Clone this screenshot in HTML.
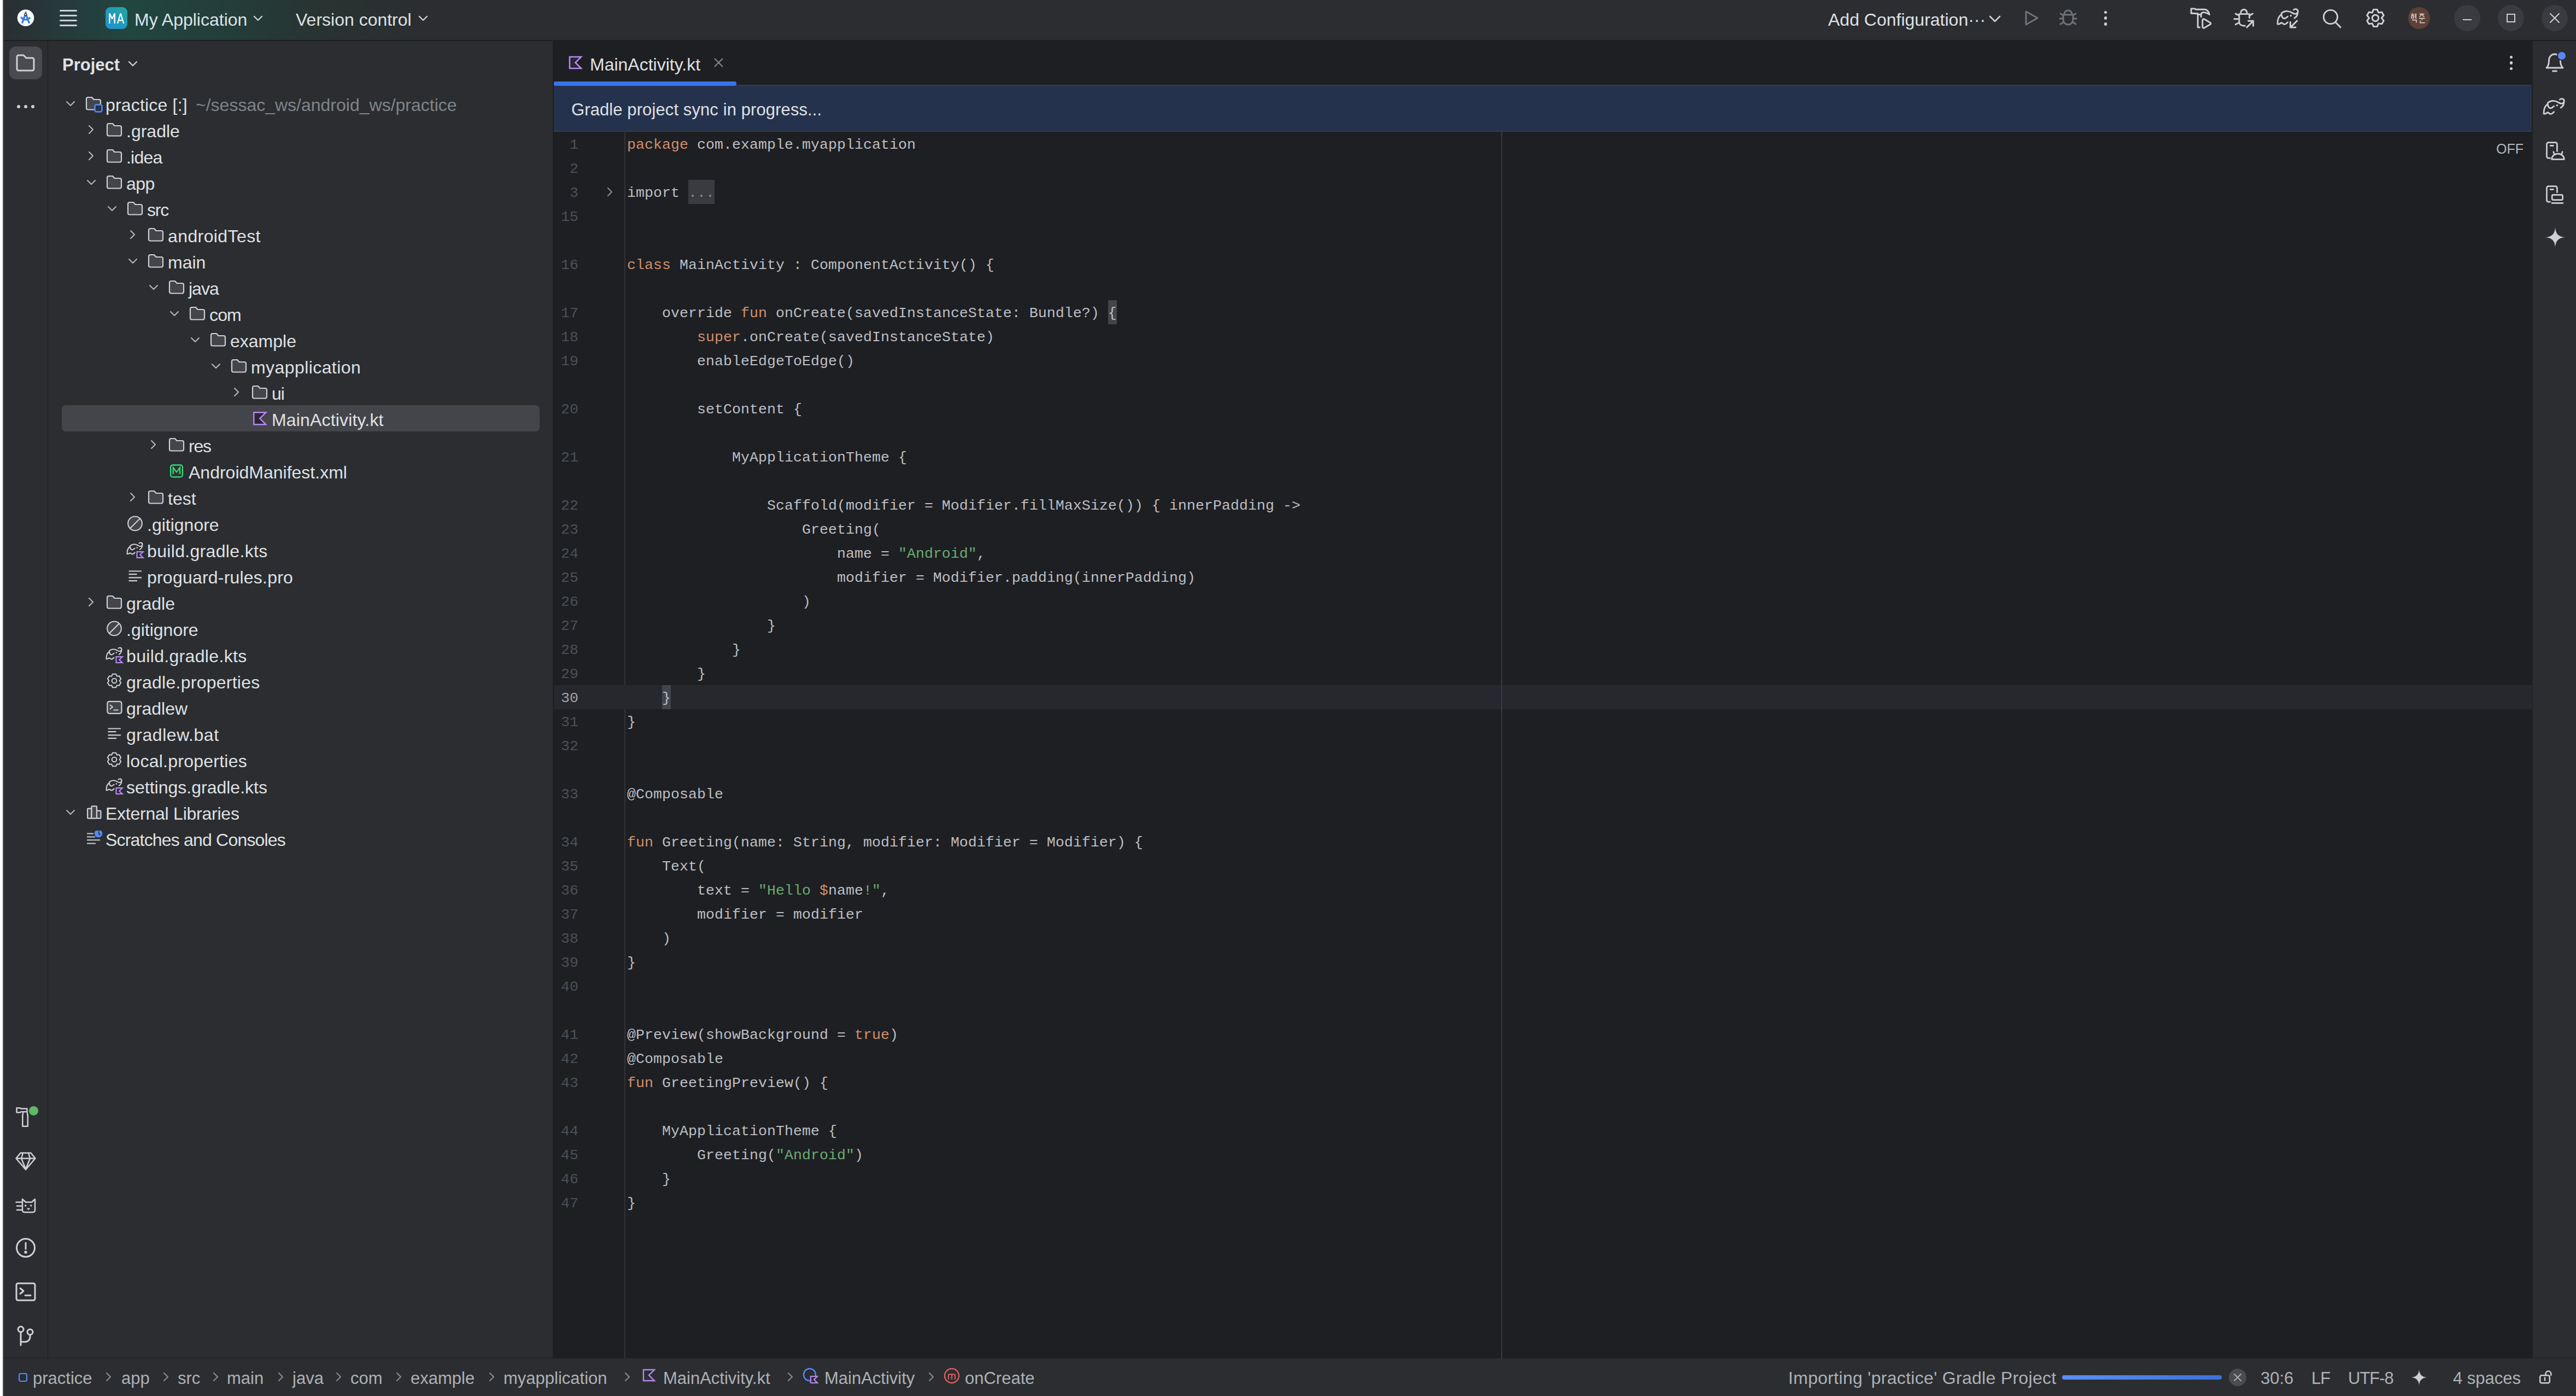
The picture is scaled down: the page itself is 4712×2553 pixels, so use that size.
<!DOCTYPE html>
<html><head><meta charset="utf-8"><style>
html,body{margin:0;padding:0;}
body{width:4712px;height:2553px;position:relative;overflow:hidden;background:#2b2d30;font-family:"Liberation Sans", sans-serif;}
body>div{position:absolute;}
.t{white-space:pre;line-height:1;}
</style></head><body>
<div style="left:0px;top:0px;width:5px;height:2553px;background:#ffffff;"></div><div style="left:5px;top:0px;width:2px;height:2553px;background:#4e5157;"></div><div style="left:7px;top:0px;width:4705px;height:73px;background:linear-gradient(90deg, #2b2e31 0px, #27383a 90px, #21463f 230px, #233e3a 400px, #283331 580px, #2b2d30 760px);"></div><div style="left:7px;top:73px;width:4705px;height:2px;background:#1e1f22;"></div><div style="left:7px;top:75px;width:80px;height:2409px;background:#2b2d30;"></div><div style="left:87px;top:75px;width:1px;height:2409px;background:#1e1f22;"></div><div style="left:88px;top:75px;width:923px;height:2409px;background:#2b2d30;"></div><div style="left:1011px;top:75px;width:3622px;height:2409px;background:#1e1f22;"></div><div style="left:4633px;top:75px;width:79px;height:2409px;background:#2b2d30;"></div><div style="left:4632px;top:75px;width:1px;height:2409px;background:#1e1f22;"></div><div style="left:7px;top:2483px;width:4705px;height:1px;background:#1e1f22;"></div><div style="left:7px;top:2484px;width:4705px;height:69px;background:#2b2d30;"></div><svg style="position:absolute;left:30px;top:16px;" width="34" height="34" viewBox="0 0 34 34" fill="none" stroke="#ced0d6" stroke-width="3" stroke-linecap="round" stroke-linejoin="round"><circle cx="17" cy="16.7" r="15" fill="#ffffff" stroke="#ffffff" stroke-width="0.6" stroke-dasharray="2 1.2"/><path d="M16.9 9 L10.8 25.4 M16.9 9 L23.2 25.4 M13 19.8 H20.5 M9 16.3 L12 18.5 M16.9 6.6 V8.5" stroke="#3b78e7" stroke-width="3.3"/><circle cx="16.9" cy="10.8" r="1.9" fill="#fff" stroke="#1a1a1a" stroke-width="1.2"/><circle cx="23.6" cy="17.2" r="2.3" fill="#3ea84f" stroke="none"/></svg><div style="left:109px;top:17.5px;width:32px;height:3px;background:#ced0d6;border-radius:2px;"></div><div style="left:109px;top:26.5px;width:32px;height:3px;background:#ced0d6;border-radius:2px;"></div><div style="left:109px;top:36.0px;width:32px;height:3px;background:#ced0d6;border-radius:2px;"></div><div style="left:109px;top:45.0px;width:32px;height:3px;background:#ced0d6;border-radius:2px;"></div><div style="left:193px;top:13px;width:40px;height:40px;background:linear-gradient(45deg,#1e8fd6 0%,#26a69a 100%);border-radius:9px;"></div><svg style="position:absolute;left:193px;top:13px;" width="40" height="40" viewBox="0 0 40 40" fill="none" stroke="#ced0d6" stroke-width="3" stroke-linecap="round" stroke-linejoin="round"><path d="M7.4 30 V11.5 L12.1 21.5 L16.8 11.5 V30 M22 30 L27.6 11.5 L33.2 30 M23.9 24.2 H31.3" stroke="#ffffff" stroke-width="2.3" stroke-linecap="butt" stroke-linejoin="bevel"/></svg><div class="t" style="left:246px;top:19.91px;font-size:32px;color:#dfe1e5;font-weight:400;font-family:'Liberation Sans', sans-serif;">My Application</div><svg style="position:absolute;left:462px;top:26px;" width="20" height="14" viewBox="0 0 20 14" fill="none" stroke="#ced0d6" stroke-width="3" stroke-linecap="round" stroke-linejoin="round"><path d="M3 4 L10 11 L17 4" stroke-width="2.4"/></svg><div class="t" style="left:541px;top:19.91px;font-size:32px;color:#dfe1e5;font-weight:400;font-family:'Liberation Sans', sans-serif;">Version control</div><svg style="position:absolute;left:764px;top:26px;" width="20" height="14" viewBox="0 0 20 14" fill="none" stroke="#ced0d6" stroke-width="3" stroke-linecap="round" stroke-linejoin="round"><path d="M3 4 L10 11 L17 4" stroke-width="2.4"/></svg><div class="t" style="left:3344px;top:19.91px;font-size:32px;color:#dfe1e5;font-weight:400;font-family:'Liberation Sans', sans-serif;">Add Configuration···</div><svg style="position:absolute;left:3637px;top:26px;" width="24" height="16" viewBox="0 0 24 16" fill="none" stroke="#ced0d6" stroke-width="3" stroke-linecap="round" stroke-linejoin="round"><path d="M3 4 L12 13 L21 4" stroke-width="2.6"/></svg><svg style="position:absolute;left:3700px;top:17px;" width="32" height="32" viewBox="0 0 32 32" fill="none" stroke="#ced0d6" stroke-width="3" stroke-linecap="round" stroke-linejoin="round"><path d="M6 4 L27 16 L6 28 Z" stroke="#6f737a"/></svg><svg style="position:absolute;left:3765px;top:17px;" width="36" height="32" viewBox="0 0 36 32" fill="none" stroke="#ced0d6" stroke-width="3" stroke-linecap="round" stroke-linejoin="round"><path d="M11 9 a7 7 0 0 1 14 0 M9 10 h18 v9 a9 9 0 0 1 -18 0 z M3 17 h6 M27 17 h6 M4 8 l5 3 M32 8 l-5 3 M4 27 l5 -3 M32 27 l-5 -3" stroke="#6f737a"/></svg><div style="left:3848.5px;top:19.75px;width:5.5px;height:5.5px;background:#ced0d6;border-radius:50%;"></div><div style="left:3848.5px;top:30.25px;width:5.5px;height:5.5px;background:#ced0d6;border-radius:50%;"></div><div style="left:3848.5px;top:41.25px;width:5.5px;height:5.5px;background:#ced0d6;border-radius:50%;"></div><svg style="position:absolute;left:4004px;top:13px;" width="44" height="42" viewBox="0 0 44 42" fill="none" stroke="#ced0d6" stroke-width="3" stroke-linecap="round" stroke-linejoin="round"><path d="M4.1 2.9 H10.5 L12.5 4.3 H28.5 C33 4.3 36.5 8.5 37.4 13.6 C33.5 10.8 30 9.6 26.5 9.6 C24 9.6 22.5 11 22.2 13.5 H16.2 V11.8 H12.5 L10.5 11.5 H4.1 Z M16.2 13.5 V37 H19.5 M22.2 13.5 V18" stroke-width="2.9"/><path d="M24.8 24 C24.8 22 26.5 21.3 28 22 L39 28.5 C40.3 29.3 40.3 30.8 39 31.6 L28 38 C26.5 38.8 24.8 38 24.8 36 Z" stroke-width="2.9"/></svg><svg style="position:absolute;left:4084px;top:13px;" width="42" height="42" viewBox="0 0 42 42" fill="none" stroke="#ced0d6" stroke-width="3" stroke-linecap="round" stroke-linejoin="round"><path d="M14.9 10.1 A5.6 5.6 0 0 1 26.1 10.1 M11.9 12.6 H30.6 V19.7 M11.9 12.6 V27 C11.9 31.5 16 34.3 22.5 34.3 M5.3 12.1 L11.4 15.2 M2.8 21.7 H9.4 M5.3 31.8 L10.9 28.8 M36.6 12.1 L31 15.2 M26 36.9 L37.6 25.3 M28.5 25.3 H37.6 V34.4" stroke-width="2.9"/></svg><svg style="position:absolute;left:4164.3px;top:11.9px;" width="45.3" height="45.3" viewBox="0 0 34 34" fill="none" stroke="#ced0d6" stroke-width="3" stroke-linecap="round" stroke-linejoin="round"><path d="M6.9 9.2 C12 5 18 6 22.5 9 C25.5 11 29.5 10 29.5 6.5 C29.5 3.5 26 2.5 23.5 4.5 M29.3 8.5 C29 12 27 14.5 24.8 15.8 M6.7 11 C3 13 1.5 17 1.5 24 C3.5 24.5 4.5 24 5.5 23 C7 21.5 8 22.5 9 23.5 C10.5 25 13 24.5 15.5 21.5 M6.9 9.4 C7 13 8 16 10.5 16.5 C12.5 16.5 14 15 15.5 13.7" stroke-width="2.1"/><circle cx="19.8" cy="12.6" r="1.3" fill="#ced0d6" stroke="none"/><path d="M28.3 19.6 L19.5 28.3 M19.1 21.3 V28.5 H26.3" stroke-width="2.2"/></svg><svg style="position:absolute;left:4246px;top:14px;" width="40" height="40" viewBox="0 0 40 40" fill="none" stroke="#ced0d6" stroke-width="3" stroke-linecap="round" stroke-linejoin="round"><circle cx="17" cy="17" r="12.6" stroke-width="2.9"/><path d="M26.6 27.3 L35.2 35.9" stroke-width="2.9"/></svg><svg style="position:absolute;left:4326px;top:14px;" width="38" height="38" viewBox="0 0 38 38" fill="none" stroke="#ced0d6" stroke-width="3" stroke-linecap="round" stroke-linejoin="round"><path d="M13.30 9.13 L15.67 3.35 L22.33 3.35 L24.70 9.13 L30.89 8.29 L34.22 14.06 L30.40 19.00 L34.22 23.94 L30.89 29.71 L24.70 28.87 L22.33 34.65 L15.67 34.65 L13.30 28.87 L7.11 29.71 L3.78 23.94 L7.60 19.00 L3.78 14.06 L7.11 8.29 Z" stroke-width="2.9"/><circle cx="19" cy="19" r="5.8" stroke-width="2.9"/></svg><div style="left:4405px;top:13px;width:40px;height:40px;background:#5d4037;border-radius:50%;"></div><svg style="position:absolute;left:4405px;top:13px;filter:blur(0.4px);" width="40" height="40" viewBox="0 0 40 40" fill="none" stroke="#ced0d6" stroke-width="3" stroke-linecap="round" stroke-linejoin="round"><path d="M6.5 12.3 h3 M5 14.6 h6 M11.5 14.3 h2.3 M11.5 17.6 h2.3 M14.2 11.6 v10 M7 23.6 h8 v5 M20.5 12.6 h9 M25 12.8 l-4.2 5.2 M25 12.8 l4.2 5.2 M19.8 20.6 h10.8 M25.2 20.8 v2.8 M22 24.4 v4.3 h8.5" stroke="#d8c9c4" stroke-width="1.7" stroke-linecap="butt" stroke-linejoin="miter"/><circle cx="8" cy="18.4" r="2.1" stroke="#d8c9c4" stroke-width="1.6"/></svg><div style="left:4489px;top:9px;width:48px;height:48px;background:#393b40;border-radius:50%;"></div><div style="left:4569px;top:9px;width:48px;height:48px;background:#393b40;border-radius:50%;"></div><div style="left:4649px;top:9px;width:48px;height:48px;background:#393b40;border-radius:50%;"></div><div style="left:4505px;top:35px;width:16px;height:2px;background:#ced0d6;"></div><div style="left:4585px;top:25px;width:16px;height:16px;background:transparent;border:2px solid #ced0d6;box-sizing:border-box;"></div><svg style="position:absolute;left:4663px;top:23px;" width="20" height="20" viewBox="0 0 20 20" fill="none" stroke="#ced0d6" stroke-width="3" stroke-linecap="round" stroke-linejoin="round"><path d="M2 2 L18 18 M18 2 L2 18" stroke-width="2"/></svg><div style="left:17px;top:85px;width:60px;height:60px;background:#494b50;border-radius:12px;"></div><svg style="position:absolute;left:27px;top:98px;" width="40" height="34" viewBox="0 0 40 34" fill="none" stroke="#ced0d6" stroke-width="3" stroke-linecap="round" stroke-linejoin="round"><path d="M4 6 a3 3 0 0 1 3 -3 h9 l5 5 h11 a3 3 0 0 1 3 3 v17 a3 3 0 0 1 -3 3 h-25 a3 3 0 0 1 -3 -3 z"/></svg><div style="left:30.8px;top:191.8px;width:6.4px;height:6.4px;background:#ced0d6;border-radius:50%;"></div><div style="left:43.8px;top:191.8px;width:6.4px;height:6.4px;background:#ced0d6;border-radius:50%;"></div><div style="left:56.8px;top:191.8px;width:6.4px;height:6.4px;background:#ced0d6;border-radius:50%;"></div><div class="t" style="left:114px;top:102.76px;font-size:31px;color:#dfe1e5;font-weight:700;font-family:'Liberation Sans', sans-serif;">Project</div><svg style="position:absolute;left:233px;top:110px;" width="20" height="14" viewBox="0 0 20 14" fill="none" stroke="#ced0d6" stroke-width="3" stroke-linecap="round" stroke-linejoin="round"><path d="M3 3 L10 10 L17 3" stroke-width="2.4"/></svg><svg style="position:absolute;left:119px;top:182.5px;" width="20" height="14" viewBox="0 0 20 14" fill="none" stroke="#ced0d6" stroke-width="3" stroke-linecap="round" stroke-linejoin="round"><path d="M3 3 L10 10 L17 3" stroke-width="2.1" stroke="#b4b8bf"/></svg><svg style="position:absolute;left:156px;top:175.5px;" width="30" height="28" viewBox="0 0 30 28" fill="none" stroke="#ced0d6" stroke-width="3" stroke-linecap="round" stroke-linejoin="round"><path d="M2 5 a3 3 0 0 1 3 -3 h7 l3.5 4 h9.5 a3 3 0 0 1 3 3 v12.5 a3 3 0 0 1 -3 3 h-20 a3 3 0 0 1 -3 -3 z" fill="#43454a" stroke-width="2.2"/></svg><svg style="position:absolute;left:172px;top:189.5px;" width="16" height="16" viewBox="0 0 16 16" fill="none" stroke="#ced0d6" stroke-width="3" stroke-linecap="round" stroke-linejoin="round"><rect x="1.5" y="1.5" width="13" height="13" rx="3" fill="#25324d" stroke="#548af7" stroke-width="2.4"/></svg><div class="t" style="left:193px;top:175.91px;font-size:32px;color:#dfe1e5;font-weight:400;font-family:'Liberation Sans', sans-serif;letter-spacing:0.18px;">practice [:]</div><div class="t" style="left:358px;top:175.91px;font-size:32px;color:#80848b;font-weight:400;font-family:'Liberation Sans', sans-serif;">~/sessac_ws/android_ws/practice</div><svg style="position:absolute;left:160px;top:227.0px;" width="14" height="20" viewBox="0 0 14 20" fill="none" stroke="#ced0d6" stroke-width="3" stroke-linecap="round" stroke-linejoin="round"><path d="M3 3 L10 10 L3 17" stroke-width="2.1" stroke="#b4b8bf"/></svg><svg style="position:absolute;left:194px;top:223.5px;" width="30" height="28" viewBox="0 0 30 28" fill="none" stroke="#ced0d6" stroke-width="3" stroke-linecap="round" stroke-linejoin="round"><path d="M2 5 a3 3 0 0 1 3 -3 h7 l3.5 4 h9.5 a3 3 0 0 1 3 3 v12.5 a3 3 0 0 1 -3 3 h-20 a3 3 0 0 1 -3 -3 z" fill="#43454a" stroke-width="2.2"/></svg><div class="t" style="left:231px;top:223.91px;font-size:32px;color:#dfe1e5;font-weight:400;font-family:'Liberation Sans', sans-serif;letter-spacing:0px;">.gradle</div><svg style="position:absolute;left:160px;top:275.0px;" width="14" height="20" viewBox="0 0 14 20" fill="none" stroke="#ced0d6" stroke-width="3" stroke-linecap="round" stroke-linejoin="round"><path d="M3 3 L10 10 L3 17" stroke-width="2.1" stroke="#b4b8bf"/></svg><svg style="position:absolute;left:194px;top:271.5px;" width="30" height="28" viewBox="0 0 30 28" fill="none" stroke="#ced0d6" stroke-width="3" stroke-linecap="round" stroke-linejoin="round"><path d="M2 5 a3 3 0 0 1 3 -3 h7 l3.5 4 h9.5 a3 3 0 0 1 3 3 v12.5 a3 3 0 0 1 -3 3 h-20 a3 3 0 0 1 -3 -3 z" fill="#43454a" stroke-width="2.2"/></svg><div class="t" style="left:231px;top:271.91px;font-size:32px;color:#dfe1e5;font-weight:400;font-family:'Liberation Sans', sans-serif;letter-spacing:-0.8px;">.idea</div><svg style="position:absolute;left:157px;top:326.5px;" width="20" height="14" viewBox="0 0 20 14" fill="none" stroke="#ced0d6" stroke-width="3" stroke-linecap="round" stroke-linejoin="round"><path d="M3 3 L10 10 L17 3" stroke-width="2.1" stroke="#b4b8bf"/></svg><svg style="position:absolute;left:194px;top:319.5px;" width="30" height="28" viewBox="0 0 30 28" fill="none" stroke="#ced0d6" stroke-width="3" stroke-linecap="round" stroke-linejoin="round"><path d="M2 5 a3 3 0 0 1 3 -3 h7 l3.5 4 h9.5 a3 3 0 0 1 3 3 v12.5 a3 3 0 0 1 -3 3 h-20 a3 3 0 0 1 -3 -3 z" fill="#43454a" stroke-width="2.2"/></svg><div class="t" style="left:231px;top:319.91px;font-size:32px;color:#dfe1e5;font-weight:400;font-family:'Liberation Sans', sans-serif;letter-spacing:-0.6px;">app</div><svg style="position:absolute;left:195px;top:374.5px;" width="20" height="14" viewBox="0 0 20 14" fill="none" stroke="#ced0d6" stroke-width="3" stroke-linecap="round" stroke-linejoin="round"><path d="M3 3 L10 10 L17 3" stroke-width="2.1" stroke="#b4b8bf"/></svg><svg style="position:absolute;left:232px;top:367.5px;" width="30" height="28" viewBox="0 0 30 28" fill="none" stroke="#ced0d6" stroke-width="3" stroke-linecap="round" stroke-linejoin="round"><path d="M2 5 a3 3 0 0 1 3 -3 h7 l3.5 4 h9.5 a3 3 0 0 1 3 3 v12.5 a3 3 0 0 1 -3 3 h-20 a3 3 0 0 1 -3 -3 z" fill="#43454a" stroke-width="2.2"/></svg><div class="t" style="left:269px;top:367.91px;font-size:32px;color:#dfe1e5;font-weight:400;font-family:'Liberation Sans', sans-serif;letter-spacing:-1.2px;">src</div><svg style="position:absolute;left:236px;top:419.0px;" width="14" height="20" viewBox="0 0 14 20" fill="none" stroke="#ced0d6" stroke-width="3" stroke-linecap="round" stroke-linejoin="round"><path d="M3 3 L10 10 L3 17" stroke-width="2.1" stroke="#b4b8bf"/></svg><svg style="position:absolute;left:270px;top:415.5px;" width="30" height="28" viewBox="0 0 30 28" fill="none" stroke="#ced0d6" stroke-width="3" stroke-linecap="round" stroke-linejoin="round"><path d="M2 5 a3 3 0 0 1 3 -3 h7 l3.5 4 h9.5 a3 3 0 0 1 3 3 v12.5 a3 3 0 0 1 -3 3 h-20 a3 3 0 0 1 -3 -3 z" fill="#43454a" stroke-width="2.2"/></svg><div class="t" style="left:307px;top:415.91px;font-size:32px;color:#dfe1e5;font-weight:400;font-family:'Liberation Sans', sans-serif;letter-spacing:0.4px;">androidTest</div><svg style="position:absolute;left:233px;top:470.5px;" width="20" height="14" viewBox="0 0 20 14" fill="none" stroke="#ced0d6" stroke-width="3" stroke-linecap="round" stroke-linejoin="round"><path d="M3 3 L10 10 L17 3" stroke-width="2.1" stroke="#b4b8bf"/></svg><svg style="position:absolute;left:270px;top:463.5px;" width="30" height="28" viewBox="0 0 30 28" fill="none" stroke="#ced0d6" stroke-width="3" stroke-linecap="round" stroke-linejoin="round"><path d="M2 5 a3 3 0 0 1 3 -3 h7 l3.5 4 h9.5 a3 3 0 0 1 3 3 v12.5 a3 3 0 0 1 -3 3 h-20 a3 3 0 0 1 -3 -3 z" fill="#43454a" stroke-width="2.2"/></svg><div class="t" style="left:307px;top:463.91px;font-size:32px;color:#dfe1e5;font-weight:400;font-family:'Liberation Sans', sans-serif;letter-spacing:0px;">main</div><svg style="position:absolute;left:271px;top:518.5px;" width="20" height="14" viewBox="0 0 20 14" fill="none" stroke="#ced0d6" stroke-width="3" stroke-linecap="round" stroke-linejoin="round"><path d="M3 3 L10 10 L17 3" stroke-width="2.1" stroke="#b4b8bf"/></svg><svg style="position:absolute;left:308px;top:511.5px;" width="30" height="28" viewBox="0 0 30 28" fill="none" stroke="#ced0d6" stroke-width="3" stroke-linecap="round" stroke-linejoin="round"><path d="M2 5 a3 3 0 0 1 3 -3 h7 l3.5 4 h9.5 a3 3 0 0 1 3 3 v12.5 a3 3 0 0 1 -3 3 h-20 a3 3 0 0 1 -3 -3 z" fill="#43454a" stroke-width="2.2"/></svg><div class="t" style="left:345px;top:511.91px;font-size:32px;color:#dfe1e5;font-weight:400;font-family:'Liberation Sans', sans-serif;letter-spacing:-1px;">java</div><svg style="position:absolute;left:309px;top:566.5px;" width="20" height="14" viewBox="0 0 20 14" fill="none" stroke="#ced0d6" stroke-width="3" stroke-linecap="round" stroke-linejoin="round"><path d="M3 3 L10 10 L17 3" stroke-width="2.1" stroke="#b4b8bf"/></svg><svg style="position:absolute;left:346px;top:559.5px;" width="30" height="28" viewBox="0 0 30 28" fill="none" stroke="#ced0d6" stroke-width="3" stroke-linecap="round" stroke-linejoin="round"><path d="M2 5 a3 3 0 0 1 3 -3 h7 l3.5 4 h9.5 a3 3 0 0 1 3 3 v12.5 a3 3 0 0 1 -3 3 h-20 a3 3 0 0 1 -3 -3 z" fill="#43454a" stroke-width="2.2"/></svg><div class="t" style="left:383px;top:559.91px;font-size:32px;color:#dfe1e5;font-weight:400;font-family:'Liberation Sans', sans-serif;letter-spacing:-0.85px;">com</div><svg style="position:absolute;left:347px;top:614.5px;" width="20" height="14" viewBox="0 0 20 14" fill="none" stroke="#ced0d6" stroke-width="3" stroke-linecap="round" stroke-linejoin="round"><path d="M3 3 L10 10 L17 3" stroke-width="2.1" stroke="#b4b8bf"/></svg><svg style="position:absolute;left:384px;top:607.5px;" width="30" height="28" viewBox="0 0 30 28" fill="none" stroke="#ced0d6" stroke-width="3" stroke-linecap="round" stroke-linejoin="round"><path d="M2 5 a3 3 0 0 1 3 -3 h7 l3.5 4 h9.5 a3 3 0 0 1 3 3 v12.5 a3 3 0 0 1 -3 3 h-20 a3 3 0 0 1 -3 -3 z" fill="#43454a" stroke-width="2.2"/></svg><div class="t" style="left:421px;top:607.91px;font-size:32px;color:#dfe1e5;font-weight:400;font-family:'Liberation Sans', sans-serif;letter-spacing:0px;">example</div><svg style="position:absolute;left:385px;top:662.5px;" width="20" height="14" viewBox="0 0 20 14" fill="none" stroke="#ced0d6" stroke-width="3" stroke-linecap="round" stroke-linejoin="round"><path d="M3 3 L10 10 L17 3" stroke-width="2.1" stroke="#b4b8bf"/></svg><svg style="position:absolute;left:422px;top:655.5px;" width="30" height="28" viewBox="0 0 30 28" fill="none" stroke="#ced0d6" stroke-width="3" stroke-linecap="round" stroke-linejoin="round"><path d="M2 5 a3 3 0 0 1 3 -3 h7 l3.5 4 h9.5 a3 3 0 0 1 3 3 v12.5 a3 3 0 0 1 -3 3 h-20 a3 3 0 0 1 -3 -3 z" fill="#43454a" stroke-width="2.2"/></svg><div class="t" style="left:459px;top:655.91px;font-size:32px;color:#dfe1e5;font-weight:400;font-family:'Liberation Sans', sans-serif;letter-spacing:0.42px;">myapplication</div><svg style="position:absolute;left:426px;top:707.0px;" width="14" height="20" viewBox="0 0 14 20" fill="none" stroke="#ced0d6" stroke-width="3" stroke-linecap="round" stroke-linejoin="round"><path d="M3 3 L10 10 L3 17" stroke-width="2.1" stroke="#b4b8bf"/></svg><svg style="position:absolute;left:460px;top:703.5px;" width="30" height="28" viewBox="0 0 30 28" fill="none" stroke="#ced0d6" stroke-width="3" stroke-linecap="round" stroke-linejoin="round"><path d="M2 5 a3 3 0 0 1 3 -3 h7 l3.5 4 h9.5 a3 3 0 0 1 3 3 v12.5 a3 3 0 0 1 -3 3 h-20 a3 3 0 0 1 -3 -3 z" fill="#43454a" stroke-width="2.2"/></svg><div class="t" style="left:497px;top:703.91px;font-size:32px;color:#dfe1e5;font-weight:400;font-family:'Liberation Sans', sans-serif;letter-spacing:-1px;">ui</div><div style="left:113px;top:740.5px;width:874px;height:48px;background:#43454a;border-radius:7px;"></div><svg style="position:absolute;left:462px;top:751.5px;" width="27" height="27" viewBox="0 0 27 27" fill="none" stroke="#ced0d6" stroke-width="3" stroke-linecap="round" stroke-linejoin="round"><path d="M2.3 2.3 H24.3 L13.3 13.3 L24.3 24.3 H2.3 Z" fill="#2b2537" stroke="#b589ec" stroke-width="2.4" stroke-linejoin="miter"/></svg><div class="t" style="left:497px;top:751.91px;font-size:32px;color:#dfe1e5;font-weight:400;font-family:'Liberation Sans', sans-serif;letter-spacing:0.17px;">MainActivity.kt</div><svg style="position:absolute;left:274px;top:803.0px;" width="14" height="20" viewBox="0 0 14 20" fill="none" stroke="#ced0d6" stroke-width="3" stroke-linecap="round" stroke-linejoin="round"><path d="M3 3 L10 10 L3 17" stroke-width="2.1" stroke="#b4b8bf"/></svg><svg style="position:absolute;left:308px;top:799.5px;" width="30" height="28" viewBox="0 0 30 28" fill="none" stroke="#ced0d6" stroke-width="3" stroke-linecap="round" stroke-linejoin="round"><path d="M2 5 a3 3 0 0 1 3 -3 h7 l3.5 4 h9.5 a3 3 0 0 1 3 3 v12.5 a3 3 0 0 1 -3 3 h-20 a3 3 0 0 1 -3 -3 z" fill="#43454a" stroke-width="2.2"/></svg><div class="t" style="left:345px;top:799.91px;font-size:32px;color:#dfe1e5;font-weight:400;font-family:'Liberation Sans', sans-serif;letter-spacing:-1.2px;">res</div><svg style="position:absolute;left:310px;top:847.5px;" width="28" height="28" viewBox="0 0 28 28" fill="none" stroke="#ced0d6" stroke-width="3" stroke-linecap="round" stroke-linejoin="round"><rect x="2.1" y="2.4" width="21.8" height="22" rx="4" fill="#243a2d" stroke="#3ddc84" stroke-width="2.2"/><path d="M6.8 19 V7 L12.9 15.5 L19 7 V19" stroke="#3ddc84" stroke-width="2.1" stroke-linejoin="miter" stroke-linecap="butt"/></svg><div class="t" style="left:345px;top:847.91px;font-size:32px;color:#dfe1e5;font-weight:400;font-family:'Liberation Sans', sans-serif;letter-spacing:0px;">AndroidManifest.xml</div><svg style="position:absolute;left:236px;top:899.0px;" width="14" height="20" viewBox="0 0 14 20" fill="none" stroke="#ced0d6" stroke-width="3" stroke-linecap="round" stroke-linejoin="round"><path d="M3 3 L10 10 L3 17" stroke-width="2.1" stroke="#b4b8bf"/></svg><svg style="position:absolute;left:270px;top:895.5px;" width="30" height="28" viewBox="0 0 30 28" fill="none" stroke="#ced0d6" stroke-width="3" stroke-linecap="round" stroke-linejoin="round"><path d="M2 5 a3 3 0 0 1 3 -3 h7 l3.5 4 h9.5 a3 3 0 0 1 3 3 v12.5 a3 3 0 0 1 -3 3 h-20 a3 3 0 0 1 -3 -3 z" fill="#43454a" stroke-width="2.2"/></svg><div class="t" style="left:307px;top:895.91px;font-size:32px;color:#dfe1e5;font-weight:400;font-family:'Liberation Sans', sans-serif;letter-spacing:0px;">test</div><svg style="position:absolute;left:232px;top:942.5px;" width="30" height="30" viewBox="0 0 30 30" fill="none" stroke="#ced0d6" stroke-width="3" stroke-linecap="round" stroke-linejoin="round"><circle cx="15" cy="14.35" r="12.85" fill="#43454a" stroke-width="2.1"/><path d="M6.3 23 L23.8 5.4" stroke-width="2.1"/></svg><div class="t" style="left:269px;top:943.91px;font-size:32px;color:#dfe1e5;font-weight:400;font-family:'Liberation Sans', sans-serif;letter-spacing:0px;">.gitignore</div><svg style="position:absolute;left:231px;top:988.5px;" width="34" height="34" viewBox="0 0 34 34" fill="none" stroke="#ced0d6" stroke-width="3" stroke-linecap="round" stroke-linejoin="round"><path d="M6.9 9.2 C12 5 18 6 22.5 9 C25.5 11 29.5 10 29.5 6.5 C29.5 3.5 26 2.5 23.5 4.5 M29.3 8.5 C29 12 27 14.5 24.8 15.8 M6.7 11 C3 13 1.5 17 1.5 24 C3.5 24.5 4.5 24 5.5 23 C7 21.5 8 22.5 9 23.5 C10.5 25 13 24.5 15.5 21.5 M6.9 9.4 C7 13 8 16 10.5 16.5 C12.5 16.5 14 15 15.5 13.7" stroke-width="2.1"/><circle cx="19.8" cy="12.6" r="1.3" fill="#ced0d6" stroke="none"/><path d="M19.5 20.2 H30.7 L25.2 25.5 L30.7 30.9 H19.5 Z" fill="#2b2537" stroke="#b589ec" stroke-width="2.2" stroke-linejoin="miter"/></svg><div class="t" style="left:269px;top:991.91px;font-size:32px;color:#dfe1e5;font-weight:400;font-family:'Liberation Sans', sans-serif;letter-spacing:0.33px;">build.gradle.kts</div><svg style="position:absolute;left:233px;top:1040.5px;" width="28" height="24" viewBox="0 0 28 24" fill="none" stroke="#ced0d6" stroke-width="3" stroke-linecap="round" stroke-linejoin="round"><path d="M2.5 3.5 h23.5 M2.5 9.2 h15 M2.5 15.4 h23.5 M2.5 21.1 h15.5" stroke-width="2.2" stroke-linecap="butt"/></svg><div class="t" style="left:269px;top:1039.91px;font-size:32px;color:#dfe1e5;font-weight:400;font-family:'Liberation Sans', sans-serif;letter-spacing:0.21px;">proguard-rules.pro</div><svg style="position:absolute;left:160px;top:1091.0px;" width="14" height="20" viewBox="0 0 14 20" fill="none" stroke="#ced0d6" stroke-width="3" stroke-linecap="round" stroke-linejoin="round"><path d="M3 3 L10 10 L3 17" stroke-width="2.1" stroke="#b4b8bf"/></svg><svg style="position:absolute;left:194px;top:1087.5px;" width="30" height="28" viewBox="0 0 30 28" fill="none" stroke="#ced0d6" stroke-width="3" stroke-linecap="round" stroke-linejoin="round"><path d="M2 5 a3 3 0 0 1 3 -3 h7 l3.5 4 h9.5 a3 3 0 0 1 3 3 v12.5 a3 3 0 0 1 -3 3 h-20 a3 3 0 0 1 -3 -3 z" fill="#43454a" stroke-width="2.2"/></svg><div class="t" style="left:231px;top:1087.91px;font-size:32px;color:#dfe1e5;font-weight:400;font-family:'Liberation Sans', sans-serif;letter-spacing:0px;">gradle</div><svg style="position:absolute;left:194px;top:1134.5px;" width="30" height="30" viewBox="0 0 30 30" fill="none" stroke="#ced0d6" stroke-width="3" stroke-linecap="round" stroke-linejoin="round"><circle cx="15" cy="14.35" r="12.85" fill="#43454a" stroke-width="2.1"/><path d="M6.3 23 L23.8 5.4" stroke-width="2.1"/></svg><div class="t" style="left:231px;top:1135.91px;font-size:32px;color:#dfe1e5;font-weight:400;font-family:'Liberation Sans', sans-serif;letter-spacing:0px;">.gitignore</div><svg style="position:absolute;left:193px;top:1180.5px;" width="34" height="34" viewBox="0 0 34 34" fill="none" stroke="#ced0d6" stroke-width="3" stroke-linecap="round" stroke-linejoin="round"><path d="M6.9 9.2 C12 5 18 6 22.5 9 C25.5 11 29.5 10 29.5 6.5 C29.5 3.5 26 2.5 23.5 4.5 M29.3 8.5 C29 12 27 14.5 24.8 15.8 M6.7 11 C3 13 1.5 17 1.5 24 C3.5 24.5 4.5 24 5.5 23 C7 21.5 8 22.5 9 23.5 C10.5 25 13 24.5 15.5 21.5 M6.9 9.4 C7 13 8 16 10.5 16.5 C12.5 16.5 14 15 15.5 13.7" stroke-width="2.1"/><circle cx="19.8" cy="12.6" r="1.3" fill="#ced0d6" stroke="none"/><path d="M19.5 20.2 H30.7 L25.2 25.5 L30.7 30.9 H19.5 Z" fill="#2b2537" stroke="#b589ec" stroke-width="2.2" stroke-linejoin="miter"/></svg><div class="t" style="left:231px;top:1183.91px;font-size:32px;color:#dfe1e5;font-weight:400;font-family:'Liberation Sans', sans-serif;letter-spacing:0.33px;">build.gradle.kts</div><svg style="position:absolute;left:195px;top:1230.5px;" width="28" height="28" viewBox="0 0 28 28" fill="none" stroke="#ced0d6" stroke-width="3" stroke-linecap="round" stroke-linejoin="round"><path d="M9.20 5.69 L10.95 1.77 L17.05 1.77 L18.80 5.69 L23.06 5.25 L26.11 10.53 L23.60 14.00 L26.11 17.47 L23.06 22.75 L18.80 22.31 L17.05 26.23 L10.95 26.23 L9.20 22.31 L4.94 22.75 L1.89 17.47 L4.40 14.00 L1.89 10.53 L4.94 5.25 Z" stroke-width="2.1"/><circle cx="14" cy="14" r="4.3" stroke-width="2.1"/></svg><div class="t" style="left:231px;top:1231.91px;font-size:32px;color:#dfe1e5;font-weight:400;font-family:'Liberation Sans', sans-serif;letter-spacing:0.26px;">gradle.properties</div><svg style="position:absolute;left:194px;top:1279.5px;" width="30" height="28" viewBox="0 0 30 28" fill="none" stroke="#ced0d6" stroke-width="3" stroke-linecap="round" stroke-linejoin="round"><rect x="2.4" y="2.8" width="26" height="22" rx="3.5" fill="#43454a" stroke-width="2.2"/><path d="M7.5 9.5 l4.5 3.5 l-4.5 3.5 M14.5 18.5 h7" stroke-width="2.2"/></svg><div class="t" style="left:231px;top:1279.91px;font-size:32px;color:#dfe1e5;font-weight:400;font-family:'Liberation Sans', sans-serif;letter-spacing:0px;">gradlew</div><svg style="position:absolute;left:195px;top:1328.5px;" width="28" height="24" viewBox="0 0 28 24" fill="none" stroke="#ced0d6" stroke-width="3" stroke-linecap="round" stroke-linejoin="round"><path d="M2.5 3.5 h23.5 M2.5 9.2 h15 M2.5 15.4 h23.5 M2.5 21.1 h15.5" stroke-width="2.2" stroke-linecap="butt"/></svg><div class="t" style="left:231px;top:1327.91px;font-size:32px;color:#dfe1e5;font-weight:400;font-family:'Liberation Sans', sans-serif;letter-spacing:0.54px;">gradlew.bat</div><svg style="position:absolute;left:195px;top:1374.5px;" width="28" height="28" viewBox="0 0 28 28" fill="none" stroke="#ced0d6" stroke-width="3" stroke-linecap="round" stroke-linejoin="round"><path d="M9.20 5.69 L10.95 1.77 L17.05 1.77 L18.80 5.69 L23.06 5.25 L26.11 10.53 L23.60 14.00 L26.11 17.47 L23.06 22.75 L18.80 22.31 L17.05 26.23 L10.95 26.23 L9.20 22.31 L4.94 22.75 L1.89 17.47 L4.40 14.00 L1.89 10.53 L4.94 5.25 Z" stroke-width="2.1"/><circle cx="14" cy="14" r="4.3" stroke-width="2.1"/></svg><div class="t" style="left:231px;top:1375.91px;font-size:32px;color:#dfe1e5;font-weight:400;font-family:'Liberation Sans', sans-serif;letter-spacing:0.25px;">local.properties</div><svg style="position:absolute;left:193px;top:1420.5px;" width="34" height="34" viewBox="0 0 34 34" fill="none" stroke="#ced0d6" stroke-width="3" stroke-linecap="round" stroke-linejoin="round"><path d="M6.9 9.2 C12 5 18 6 22.5 9 C25.5 11 29.5 10 29.5 6.5 C29.5 3.5 26 2.5 23.5 4.5 M29.3 8.5 C29 12 27 14.5 24.8 15.8 M6.7 11 C3 13 1.5 17 1.5 24 C3.5 24.5 4.5 24 5.5 23 C7 21.5 8 22.5 9 23.5 C10.5 25 13 24.5 15.5 21.5 M6.9 9.4 C7 13 8 16 10.5 16.5 C12.5 16.5 14 15 15.5 13.7" stroke-width="2.1"/><circle cx="19.8" cy="12.6" r="1.3" fill="#ced0d6" stroke="none"/><path d="M19.5 20.2 H30.7 L25.2 25.5 L30.7 30.9 H19.5 Z" fill="#2b2537" stroke="#b589ec" stroke-width="2.2" stroke-linejoin="miter"/></svg><div class="t" style="left:231px;top:1423.91px;font-size:32px;color:#dfe1e5;font-weight:400;font-family:'Liberation Sans', sans-serif;letter-spacing:0px;">settings.gradle.kts</div><svg style="position:absolute;left:119px;top:1478.5px;" width="20" height="14" viewBox="0 0 20 14" fill="none" stroke="#ced0d6" stroke-width="3" stroke-linecap="round" stroke-linejoin="round"><path d="M3 3 L10 10 L17 3" stroke-width="2.1" stroke="#b4b8bf"/></svg><svg style="position:absolute;left:156px;top:1470.5px;" width="30" height="30" viewBox="0 0 30 30" fill="none" stroke="#ced0d6" stroke-width="3" stroke-linecap="round" stroke-linejoin="round"><rect x="4.1" y="7.6" width="7.4" height="18" rx="1" fill="#43454a" stroke-width="2.2"/><rect x="11.5" y="3.3" width="9.5" height="22.3" rx="1" fill="#43454a" stroke-width="2.2"/><rect x="21" y="11.6" width="7.4" height="14" rx="1" fill="#43454a" stroke-width="2.2"/></svg><div class="t" style="left:193px;top:1471.91px;font-size:32px;color:#dfe1e5;font-weight:400;font-family:'Liberation Sans', sans-serif;letter-spacing:-0.24px;">External Libraries</div><svg style="position:absolute;left:156px;top:1518.5px;" width="36" height="38" viewBox="0 0 36 38" fill="none" stroke="#ced0d6" stroke-width="3" stroke-linecap="round" stroke-linejoin="round"><path d="M3 5.5 h12 M3 11.5 h15 M3 17.3 h24 M3 23.5 h16" stroke-width="2.1" stroke-linecap="butt"/><circle cx="24" cy="5.4" r="8.3" fill="#2b2d30" stroke="none"/><circle cx="24" cy="5.4" r="7.2" fill="#548af7" stroke="none"/><path d="M24.8 1.2 v4.7 l2.2 2.1" stroke="#2b2d30" stroke-width="1.8" stroke-linecap="butt"/></svg><div class="t" style="left:193px;top:1519.91px;font-size:32px;color:#dfe1e5;font-weight:400;font-family:'Liberation Sans', sans-serif;letter-spacing:-0.81px;">Scratches and Consoles</div><svg style="position:absolute;left:1039px;top:100px;" width="28" height="30" viewBox="0 0 28 28" fill="none" stroke="#ced0d6" stroke-width="3" stroke-linecap="round" stroke-linejoin="round"><path d="M3 3 h21 l-10.5 10.5 l10.5 10.5 h-21 z" fill="#2b2537" stroke="#b589ec" stroke-width="2.6" stroke-linejoin="miter"/></svg><div class="t" style="left:1079px;top:101.91px;font-size:32px;color:#dfe1e5;font-weight:400;font-family:'Liberation Sans', sans-serif;">MainActivity.kt</div><svg style="position:absolute;left:1305px;top:105px;" width="20" height="20" viewBox="0 0 20 20" fill="none" stroke="#ced0d6" stroke-width="3" stroke-linecap="round" stroke-linejoin="round"><path d="M2.5 2.5 L16.5 16.5 M16.5 2.5 L2.5 16.5" stroke="#868a91" stroke-width="2"/></svg><div style="left:1013px;top:149px;width:334px;height:8px;background:#3574f0;border-radius:4px;"></div><div style="left:4590.5px;top:101.9px;width:5.2px;height:5.2px;background:#ced0d6;border-radius:50%;"></div><div style="left:4590.5px;top:112.4px;width:5.2px;height:5.2px;background:#ced0d6;border-radius:50%;"></div><div style="left:4590.5px;top:122.9px;width:5.2px;height:5.2px;background:#ced0d6;border-radius:50%;"></div><div style="left:1013px;top:155px;width:3618px;height:86px;background:#393b40;"></div><div style="left:1013px;top:157px;width:3618px;height:82px;background:#25324d;"></div><div style="left:1013px;top:149px;width:334px;height:8px;background:#3574f0;border-radius:4px;"></div><div class="t" style="left:1045px;top:184.76px;font-size:31px;color:#dfe1e5;font-weight:400;font-family:'Liberation Sans', sans-serif;letter-spacing:0.1px;">Gradle project sync in progress...</div><div style="left:1142px;top:241px;width:2px;height:2243px;background:#313438;"></div><div style="left:2746px;top:241px;width:2px;height:2243px;background:#393b40;"></div><div style="left:1013px;top:1253px;width:3619px;height:44px;background:#26282e;"></div><div style="left:2746px;top:1253px;width:2px;height:44px;background:#393b40;"></div><div class="t" style="left:4566px;top:259.84px;font-size:25px;color:#b4b8bf;font-weight:400;font-family:'Liberation Sans', sans-serif;">OFF</div><div style="left:1259px;top:329px;width:48px;height:44px;background:#393b40;"></div><div class="t" style="left:1259.0px;top:340.07px;font-size:26.67px;color:#868a91;font-weight:400;font-family:'Liberation Mono', monospace;">...</div><div style="left:2027.0px;top:549px;width:16px;height:44px;background:#43454a;"></div><div style="left:1211.0px;top:1253px;width:16px;height:44px;background:#43454a;"></div><svg style="position:absolute;left:1108px;top:341px;" width="16" height="20" viewBox="0 0 16 20" fill="none" stroke="#ced0d6" stroke-width="3" stroke-linecap="round" stroke-linejoin="round"><path d="M4 3 L11 10 L4 17" stroke="#868a91" stroke-width="2.2"/></svg><div class="t" style="left:1042.0px;top:252.07px;font-size:26.67px;color:#4b5059;font-weight:400;font-family:'Liberation Mono', monospace;">1</div><div class="t" style="left:1147.0px;top:252.07px;font-size:26.67px;color:#bcbec4;font-weight:400;font-family:'Liberation Mono', monospace;"><span style="color:#cf8e6d">package</span><span style="color:#bcbec4"> com.example.myapplication</span></div><div class="t" style="left:1042.0px;top:296.07px;font-size:26.67px;color:#4b5059;font-weight:400;font-family:'Liberation Mono', monospace;">2</div><div class="t" style="left:1042.0px;top:340.07px;font-size:26.67px;color:#4b5059;font-weight:400;font-family:'Liberation Mono', monospace;">3</div><div class="t" style="left:1147.0px;top:340.07px;font-size:26.67px;color:#bcbec4;font-weight:400;font-family:'Liberation Mono', monospace;"><span style="color:#bcbec4">import </span></div><div class="t" style="left:1026.0px;top:384.07px;font-size:26.67px;color:#4b5059;font-weight:400;font-family:'Liberation Mono', monospace;">15</div><div class="t" style="left:1026.0px;top:472.07px;font-size:26.67px;color:#4b5059;font-weight:400;font-family:'Liberation Mono', monospace;">16</div><div class="t" style="left:1147.0px;top:472.07px;font-size:26.67px;color:#bcbec4;font-weight:400;font-family:'Liberation Mono', monospace;"><span style="color:#cf8e6d">class</span><span style="color:#bcbec4"> MainActivity : ComponentActivity() {</span></div><div class="t" style="left:1026.0px;top:560.07px;font-size:26.67px;color:#4b5059;font-weight:400;font-family:'Liberation Mono', monospace;">17</div><div class="t" style="left:1147.0px;top:560.07px;font-size:26.67px;color:#bcbec4;font-weight:400;font-family:'Liberation Mono', monospace;"><span style="color:#bcbec4">    override </span><span style="color:#cf8e6d">fun</span><span style="color:#bcbec4"> onCreate(savedInstanceState: Bundle?) {</span></div><div class="t" style="left:1026.0px;top:604.07px;font-size:26.67px;color:#4b5059;font-weight:400;font-family:'Liberation Mono', monospace;">18</div><div class="t" style="left:1147.0px;top:604.07px;font-size:26.67px;color:#bcbec4;font-weight:400;font-family:'Liberation Mono', monospace;"><span style="color:#bcbec4">        </span><span style="color:#cf8e6d">super</span><span style="color:#bcbec4">.onCreate(savedInstanceState)</span></div><div class="t" style="left:1026.0px;top:648.07px;font-size:26.67px;color:#4b5059;font-weight:400;font-family:'Liberation Mono', monospace;">19</div><div class="t" style="left:1147.0px;top:648.07px;font-size:26.67px;color:#bcbec4;font-weight:400;font-family:'Liberation Mono', monospace;"><span style="color:#bcbec4">        enableEdgeToEdge()</span></div><div class="t" style="left:1026.0px;top:736.07px;font-size:26.67px;color:#4b5059;font-weight:400;font-family:'Liberation Mono', monospace;">20</div><div class="t" style="left:1147.0px;top:736.07px;font-size:26.67px;color:#bcbec4;font-weight:400;font-family:'Liberation Mono', monospace;"><span style="color:#bcbec4">        setContent {</span></div><div class="t" style="left:1026.0px;top:824.07px;font-size:26.67px;color:#4b5059;font-weight:400;font-family:'Liberation Mono', monospace;">21</div><div class="t" style="left:1147.0px;top:824.07px;font-size:26.67px;color:#bcbec4;font-weight:400;font-family:'Liberation Mono', monospace;"><span style="color:#bcbec4">            MyApplicationTheme {</span></div><div class="t" style="left:1026.0px;top:912.07px;font-size:26.67px;color:#4b5059;font-weight:400;font-family:'Liberation Mono', monospace;">22</div><div class="t" style="left:1147.0px;top:912.07px;font-size:26.67px;color:#bcbec4;font-weight:400;font-family:'Liberation Mono', monospace;"><span style="color:#bcbec4">                Scaffold(modifier = Modifier.fillMaxSize()) { innerPadding -&gt;</span></div><div class="t" style="left:1026.0px;top:956.07px;font-size:26.67px;color:#4b5059;font-weight:400;font-family:'Liberation Mono', monospace;">23</div><div class="t" style="left:1147.0px;top:956.07px;font-size:26.67px;color:#bcbec4;font-weight:400;font-family:'Liberation Mono', monospace;"><span style="color:#bcbec4">                    Greeting(</span></div><div class="t" style="left:1026.0px;top:1000.07px;font-size:26.67px;color:#4b5059;font-weight:400;font-family:'Liberation Mono', monospace;">24</div><div class="t" style="left:1147.0px;top:1000.07px;font-size:26.67px;color:#bcbec4;font-weight:400;font-family:'Liberation Mono', monospace;"><span style="color:#bcbec4">                        name = </span><span style="color:#6aab73">&quot;Android&quot;</span><span style="color:#bcbec4">,</span></div><div class="t" style="left:1026.0px;top:1044.07px;font-size:26.67px;color:#4b5059;font-weight:400;font-family:'Liberation Mono', monospace;">25</div><div class="t" style="left:1147.0px;top:1044.07px;font-size:26.67px;color:#bcbec4;font-weight:400;font-family:'Liberation Mono', monospace;"><span style="color:#bcbec4">                        modifier = Modifier.padding(innerPadding)</span></div><div class="t" style="left:1026.0px;top:1088.07px;font-size:26.67px;color:#4b5059;font-weight:400;font-family:'Liberation Mono', monospace;">26</div><div class="t" style="left:1147.0px;top:1088.07px;font-size:26.67px;color:#bcbec4;font-weight:400;font-family:'Liberation Mono', monospace;"><span style="color:#bcbec4">                    )</span></div><div class="t" style="left:1026.0px;top:1132.07px;font-size:26.67px;color:#4b5059;font-weight:400;font-family:'Liberation Mono', monospace;">27</div><div class="t" style="left:1147.0px;top:1132.07px;font-size:26.67px;color:#bcbec4;font-weight:400;font-family:'Liberation Mono', monospace;"><span style="color:#bcbec4">                }</span></div><div class="t" style="left:1026.0px;top:1176.07px;font-size:26.67px;color:#4b5059;font-weight:400;font-family:'Liberation Mono', monospace;">28</div><div class="t" style="left:1147.0px;top:1176.07px;font-size:26.67px;color:#bcbec4;font-weight:400;font-family:'Liberation Mono', monospace;"><span style="color:#bcbec4">            }</span></div><div class="t" style="left:1026.0px;top:1220.07px;font-size:26.67px;color:#4b5059;font-weight:400;font-family:'Liberation Mono', monospace;">29</div><div class="t" style="left:1147.0px;top:1220.07px;font-size:26.67px;color:#bcbec4;font-weight:400;font-family:'Liberation Mono', monospace;"><span style="color:#bcbec4">        }</span></div><div class="t" style="left:1026.0px;top:1264.07px;font-size:26.67px;color:#a1a3ab;font-weight:400;font-family:'Liberation Mono', monospace;">30</div><div class="t" style="left:1147.0px;top:1264.07px;font-size:26.67px;color:#bcbec4;font-weight:400;font-family:'Liberation Mono', monospace;"><span style="color:#bcbec4">    }</span></div><div class="t" style="left:1026.0px;top:1308.07px;font-size:26.67px;color:#4b5059;font-weight:400;font-family:'Liberation Mono', monospace;">31</div><div class="t" style="left:1147.0px;top:1308.07px;font-size:26.67px;color:#bcbec4;font-weight:400;font-family:'Liberation Mono', monospace;"><span style="color:#bcbec4">}</span></div><div class="t" style="left:1026.0px;top:1352.07px;font-size:26.67px;color:#4b5059;font-weight:400;font-family:'Liberation Mono', monospace;">32</div><div class="t" style="left:1026.0px;top:1440.07px;font-size:26.67px;color:#4b5059;font-weight:400;font-family:'Liberation Mono', monospace;">33</div><div class="t" style="left:1147.0px;top:1440.07px;font-size:26.67px;color:#bcbec4;font-weight:400;font-family:'Liberation Mono', monospace;"><span style="color:#bcbec4">@Composable</span></div><div class="t" style="left:1026.0px;top:1528.07px;font-size:26.67px;color:#4b5059;font-weight:400;font-family:'Liberation Mono', monospace;">34</div><div class="t" style="left:1147.0px;top:1528.07px;font-size:26.67px;color:#bcbec4;font-weight:400;font-family:'Liberation Mono', monospace;"><span style="color:#cf8e6d">fun</span><span style="color:#bcbec4"> Greeting(name: String, modifier: Modifier = Modifier) {</span></div><div class="t" style="left:1026.0px;top:1572.07px;font-size:26.67px;color:#4b5059;font-weight:400;font-family:'Liberation Mono', monospace;">35</div><div class="t" style="left:1147.0px;top:1572.07px;font-size:26.67px;color:#bcbec4;font-weight:400;font-family:'Liberation Mono', monospace;"><span style="color:#bcbec4">    Text(</span></div><div class="t" style="left:1026.0px;top:1616.07px;font-size:26.67px;color:#4b5059;font-weight:400;font-family:'Liberation Mono', monospace;">36</div><div class="t" style="left:1147.0px;top:1616.07px;font-size:26.67px;color:#bcbec4;font-weight:400;font-family:'Liberation Mono', monospace;"><span style="color:#bcbec4">        text = </span><span style="color:#6aab73">&quot;Hello </span><span style="color:#cf8e6d">$</span><span style="color:#bcbec4">name</span><span style="color:#6aab73">!&quot;</span><span style="color:#bcbec4">,</span></div><div class="t" style="left:1026.0px;top:1660.07px;font-size:26.67px;color:#4b5059;font-weight:400;font-family:'Liberation Mono', monospace;">37</div><div class="t" style="left:1147.0px;top:1660.07px;font-size:26.67px;color:#bcbec4;font-weight:400;font-family:'Liberation Mono', monospace;"><span style="color:#bcbec4">        modifier = modifier</span></div><div class="t" style="left:1026.0px;top:1704.07px;font-size:26.67px;color:#4b5059;font-weight:400;font-family:'Liberation Mono', monospace;">38</div><div class="t" style="left:1147.0px;top:1704.07px;font-size:26.67px;color:#bcbec4;font-weight:400;font-family:'Liberation Mono', monospace;"><span style="color:#bcbec4">    )</span></div><div class="t" style="left:1026.0px;top:1748.07px;font-size:26.67px;color:#4b5059;font-weight:400;font-family:'Liberation Mono', monospace;">39</div><div class="t" style="left:1147.0px;top:1748.07px;font-size:26.67px;color:#bcbec4;font-weight:400;font-family:'Liberation Mono', monospace;"><span style="color:#bcbec4">}</span></div><div class="t" style="left:1026.0px;top:1792.07px;font-size:26.67px;color:#4b5059;font-weight:400;font-family:'Liberation Mono', monospace;">40</div><div class="t" style="left:1026.0px;top:1880.07px;font-size:26.67px;color:#4b5059;font-weight:400;font-family:'Liberation Mono', monospace;">41</div><div class="t" style="left:1147.0px;top:1880.07px;font-size:26.67px;color:#bcbec4;font-weight:400;font-family:'Liberation Mono', monospace;"><span style="color:#bcbec4">@Preview(showBackground = </span><span style="color:#cf8e6d">true</span><span style="color:#bcbec4">)</span></div><div class="t" style="left:1026.0px;top:1924.07px;font-size:26.67px;color:#4b5059;font-weight:400;font-family:'Liberation Mono', monospace;">42</div><div class="t" style="left:1147.0px;top:1924.07px;font-size:26.67px;color:#bcbec4;font-weight:400;font-family:'Liberation Mono', monospace;"><span style="color:#bcbec4">@Composable</span></div><div class="t" style="left:1026.0px;top:1968.07px;font-size:26.67px;color:#4b5059;font-weight:400;font-family:'Liberation Mono', monospace;">43</div><div class="t" style="left:1147.0px;top:1968.07px;font-size:26.67px;color:#bcbec4;font-weight:400;font-family:'Liberation Mono', monospace;"><span style="color:#cf8e6d">fun</span><span style="color:#bcbec4"> GreetingPreview() {</span></div><div class="t" style="left:1026.0px;top:2056.07px;font-size:26.67px;color:#4b5059;font-weight:400;font-family:'Liberation Mono', monospace;">44</div><div class="t" style="left:1147.0px;top:2056.07px;font-size:26.67px;color:#bcbec4;font-weight:400;font-family:'Liberation Mono', monospace;"><span style="color:#bcbec4">    MyApplicationTheme {</span></div><div class="t" style="left:1026.0px;top:2100.07px;font-size:26.67px;color:#4b5059;font-weight:400;font-family:'Liberation Mono', monospace;">45</div><div class="t" style="left:1147.0px;top:2100.07px;font-size:26.67px;color:#bcbec4;font-weight:400;font-family:'Liberation Mono', monospace;"><span style="color:#bcbec4">        Greeting(</span><span style="color:#6aab73">&quot;Android&quot;</span><span style="color:#bcbec4">)</span></div><div class="t" style="left:1026.0px;top:2144.07px;font-size:26.67px;color:#4b5059;font-weight:400;font-family:'Liberation Mono', monospace;">46</div><div class="t" style="left:1147.0px;top:2144.07px;font-size:26.67px;color:#bcbec4;font-weight:400;font-family:'Liberation Mono', monospace;"><span style="color:#bcbec4">    }</span></div><div class="t" style="left:1026.0px;top:2188.07px;font-size:26.67px;color:#4b5059;font-weight:400;font-family:'Liberation Mono', monospace;">47</div><div class="t" style="left:1147.0px;top:2188.07px;font-size:26.67px;color:#bcbec4;font-weight:400;font-family:'Liberation Mono', monospace;"><span style="color:#bcbec4">}</span></div><svg style="position:absolute;left:4652px;top:94px;" width="42" height="42" viewBox="0 0 42 42" fill="none" stroke="#ced0d6" stroke-width="3" stroke-linecap="round" stroke-linejoin="round"><path d="M6 30 C9.5 27 10.5 23 10.5 17 C10.5 10 15 5 21 5 C27 5 31.5 10 31.5 17 C31.5 23 32.5 27 36 30 Z M17.5 36 H24.5" stroke-width="2.9"/></svg><div style="left:4677px;top:93px;width:18px;height:18px;background:#548af7;border-radius:50%;border:2px solid #2b2d30;box-sizing:border-box;"></div><svg style="position:absolute;left:4650.5px;top:175.5px;" width="45.3" height="45.3" viewBox="0 0 34 34" fill="none" stroke="#ced0d6" stroke-width="3" stroke-linecap="round" stroke-linejoin="round"><path d="M6.9 9.2 C12 5 18 6 22.5 9 C25.5 11 29.5 10 29.5 6.5 C29.5 3.5 26 2.5 23.5 4.5 M29.3 8.5 C29 12 27 14.5 24.8 15.8 M6.7 11 C3 13 1.5 17 1.5 24 C3.5 24.5 4.5 24 5.5 23 C7 21.5 8 22.5 9 23.5 C10.5 25 13 24.5 15.5 21.5 M6.9 9.4 C7 13 8 16 10.5 16.5 C12.5 16.5 14 15 15.5 13.7" stroke-width="2.1"/><circle cx="19.8" cy="12.6" r="1.3" fill="#ced0d6" stroke="none"/></svg><svg style="position:absolute;left:4653px;top:256px;" width="42" height="40" viewBox="0 0 42 40" fill="none" stroke="#ced0d6" stroke-width="3" stroke-linecap="round" stroke-linejoin="round"><path d="M11.5 33.2 H8.5 A3 3 0 0 1 5.5 30.2 V7.7 A3 3 0 0 1 8.5 4.7 H21.4 A3 3 0 0 1 24.4 7.7 V20.6 M12 10.3 H17.5 M14.6 35.4 A11.35 10.3 0 0 1 37.3 35.4 Z M18.9 25.4 L17.8 21.6 M33 25.4 L34.1 21.6" stroke-width="2.7"/></svg><svg style="position:absolute;left:4653px;top:336px;" width="42" height="40" viewBox="0 0 42 40" fill="none" stroke="#ced0d6" stroke-width="3" stroke-linecap="round" stroke-linejoin="round"><path d="M11.5 33.2 H8.5 A3 3 0 0 1 5.5 30.2 V7.7 A3 3 0 0 1 8.5 4.7 H21.4 A3 3 0 0 1 24.4 7.7 V15.8 M12 10.3 H17.5 M15 35.4 H35" stroke-width="2.7"/><rect x="15.2" y="20.3" width="19.4" height="9.3" rx="2" stroke-width="2.7"/></svg><svg style="position:absolute;left:4654px;top:414px;" width="40" height="40" viewBox="0 0 40 40" fill="none" stroke="#ced0d6" stroke-width="3" stroke-linecap="round" stroke-linejoin="round"><path d="M20 2 C21 14 26 19 38 20 C26 21 21 26 20 38 C19 26 14 21 2 20 C14 19 19 14 20 2 Z" fill="#ced0d6" stroke="none"/></svg><svg style="position:absolute;left:25px;top:2020px;" width="46" height="46" viewBox="0 0 46 46" fill="none" stroke="#ced0d6" stroke-width="3" stroke-linecap="round" stroke-linejoin="round"><path d="M5.5 6.2 H11.5 L13.5 7.6 H24.5 V13.2 H13.5 L11.5 14.6 H5.5 Z M17 15.5 L16.3 20.5 V39.8 H25.8 V20.5 L25 15.5" stroke-width="2.5"/></svg><div style="left:51.5px;top:2021.5px;width:17px;height:17px;background:#5fb865;border-radius:50%;border:1.5px solid #2b2d30;"></div><svg style="position:absolute;left:27px;top:2104px;" width="40" height="40" viewBox="0 0 40 40" fill="none" stroke="#ced0d6" stroke-width="3" stroke-linecap="round" stroke-linejoin="round"><path d="M10.5 4.5 H29.5 L37.5 14.5 L20 35 L2.5 14.5 Z M2.5 14.5 H37.5 M15 4.5 L12 14.5 L20 34 L28 14.5 L25 4.5" stroke-width="2.5"/></svg><svg style="position:absolute;left:27px;top:2188px;" width="40" height="36" viewBox="0 0 40 36" fill="none" stroke="#ced0d6" stroke-width="3" stroke-linecap="round" stroke-linejoin="round"><path d="M14 5 L20 10.5 H31 L37 5 V25.5 A3.5 3.5 0 0 1 33.5 29 H17.5 A3.5 3.5 0 0 1 14 25.5 Z M2.5 10.5 H12 M4 17.6 H12 M4 24.7 H12" stroke-width="2.5"/><circle cx="19.6" cy="16.8" r="1.7" fill="#ced0d6" stroke="none"/><circle cx="29.8" cy="16.8" r="1.7" fill="#ced0d6" stroke="none"/><path d="M23 22 H27.5 L25.2 24.5 Z" fill="#ced0d6" stroke-width="1"/></svg><svg style="position:absolute;left:27px;top:2262px;" width="40" height="40" viewBox="0 0 40 40" fill="none" stroke="#ced0d6" stroke-width="3" stroke-linecap="round" stroke-linejoin="round"><circle cx="20" cy="20" r="16.5"/><path d="M20 11 v11"/><circle cx="20" cy="28" r="1.2" fill="#ced0d6"/></svg><svg style="position:absolute;left:27px;top:2344px;" width="40" height="38" viewBox="0 0 40 38" fill="none" stroke="#ced0d6" stroke-width="3" stroke-linecap="round" stroke-linejoin="round"><rect x="3" y="3" width="34" height="31" rx="3"/><path d="M10 12 l6 5 l-6 5 M19 25 h10"/></svg><svg style="position:absolute;left:27px;top:2422px;" width="40" height="42" viewBox="0 0 40 42" fill="none" stroke="#ced0d6" stroke-width="3" stroke-linecap="round" stroke-linejoin="round"><circle cx="11" cy="9" r="5"/><circle cx="28" cy="14" r="5"/><path d="M11 14 v24 M11 32 h8 a9 9 0 0 0 9 -9 v-4"/></svg><svg style="position:absolute;left:32px;top:2509px;" width="20" height="20" viewBox="0 0 20 20" fill="none" stroke="#ced0d6" stroke-width="3" stroke-linecap="round" stroke-linejoin="round"><rect x="3" y="3" width="14" height="14" rx="3" stroke="#548af7" stroke-width="2.2"/></svg><div class="t" style="left:60px;top:2504.76px;font-size:31px;color:#aeb1b7;font-weight:400;font-family:'Liberation Sans', sans-serif;">practice</div><div class="t" style="left:222px;top:2504.76px;font-size:31px;color:#aeb1b7;font-weight:400;font-family:'Liberation Sans', sans-serif;">app</div><div class="t" style="left:325px;top:2504.76px;font-size:31px;color:#aeb1b7;font-weight:400;font-family:'Liberation Sans', sans-serif;">src</div><div class="t" style="left:415px;top:2504.76px;font-size:31px;color:#aeb1b7;font-weight:400;font-family:'Liberation Sans', sans-serif;">main</div><div class="t" style="left:535px;top:2504.76px;font-size:31px;color:#aeb1b7;font-weight:400;font-family:'Liberation Sans', sans-serif;">java</div><div class="t" style="left:641px;top:2504.76px;font-size:31px;color:#aeb1b7;font-weight:400;font-family:'Liberation Sans', sans-serif;">com</div><div class="t" style="left:751px;top:2504.76px;font-size:31px;color:#aeb1b7;font-weight:400;font-family:'Liberation Sans', sans-serif;">example</div><div class="t" style="left:921px;top:2504.76px;font-size:31px;color:#aeb1b7;font-weight:400;font-family:'Liberation Sans', sans-serif;">myapplication</div><svg style="position:absolute;left:191px;top:2507px;" width="16" height="22" viewBox="0 0 16 22" fill="none" stroke="#ced0d6" stroke-width="3" stroke-linecap="round" stroke-linejoin="round"><path d="M4 4 L11 11 L4 18" stroke="#868a91" stroke-width="2.2"/></svg><svg style="position:absolute;left:296px;top:2507px;" width="16" height="22" viewBox="0 0 16 22" fill="none" stroke="#ced0d6" stroke-width="3" stroke-linecap="round" stroke-linejoin="round"><path d="M4 4 L11 11 L4 18" stroke="#868a91" stroke-width="2.2"/></svg><svg style="position:absolute;left:387px;top:2507px;" width="16" height="22" viewBox="0 0 16 22" fill="none" stroke="#ced0d6" stroke-width="3" stroke-linecap="round" stroke-linejoin="round"><path d="M4 4 L11 11 L4 18" stroke="#868a91" stroke-width="2.2"/></svg><svg style="position:absolute;left:506px;top:2507px;" width="16" height="22" viewBox="0 0 16 22" fill="none" stroke="#ced0d6" stroke-width="3" stroke-linecap="round" stroke-linejoin="round"><path d="M4 4 L11 11 L4 18" stroke="#868a91" stroke-width="2.2"/></svg><svg style="position:absolute;left:612px;top:2507px;" width="16" height="22" viewBox="0 0 16 22" fill="none" stroke="#ced0d6" stroke-width="3" stroke-linecap="round" stroke-linejoin="round"><path d="M4 4 L11 11 L4 18" stroke="#868a91" stroke-width="2.2"/></svg><svg style="position:absolute;left:722px;top:2507px;" width="16" height="22" viewBox="0 0 16 22" fill="none" stroke="#ced0d6" stroke-width="3" stroke-linecap="round" stroke-linejoin="round"><path d="M4 4 L11 11 L4 18" stroke="#868a91" stroke-width="2.2"/></svg><svg style="position:absolute;left:892px;top:2507px;" width="16" height="22" viewBox="0 0 16 22" fill="none" stroke="#ced0d6" stroke-width="3" stroke-linecap="round" stroke-linejoin="round"><path d="M4 4 L11 11 L4 18" stroke="#868a91" stroke-width="2.2"/></svg><svg style="position:absolute;left:1140px;top:2507px;" width="16" height="22" viewBox="0 0 16 22" fill="none" stroke="#ced0d6" stroke-width="3" stroke-linecap="round" stroke-linejoin="round"><path d="M4 4 L11 11 L4 18" stroke="#868a91" stroke-width="2.2"/></svg><svg style="position:absolute;left:1438px;top:2507px;" width="16" height="22" viewBox="0 0 16 22" fill="none" stroke="#ced0d6" stroke-width="3" stroke-linecap="round" stroke-linejoin="round"><path d="M4 4 L11 11 L4 18" stroke="#868a91" stroke-width="2.2"/></svg><svg style="position:absolute;left:1696px;top:2507px;" width="16" height="22" viewBox="0 0 16 22" fill="none" stroke="#ced0d6" stroke-width="3" stroke-linecap="round" stroke-linejoin="round"><path d="M4 4 L11 11 L4 18" stroke="#868a91" stroke-width="2.2"/></svg><svg style="position:absolute;left:1175px;top:2503px;" width="26" height="26" viewBox="0 0 26 26" fill="none" stroke="#ced0d6" stroke-width="3" stroke-linecap="round" stroke-linejoin="round"><path d="M2 2 h20 l-10 10 l10 10 h-20 z" fill="none" stroke="#b589ec" stroke-width="2.4" stroke-linejoin="miter"/></svg><div class="t" style="left:1213px;top:2504.76px;font-size:31px;color:#aeb1b7;font-weight:400;font-family:'Liberation Sans', sans-serif;">MainActivity.kt</div><svg style="position:absolute;left:1467px;top:2500px;" width="32" height="32" viewBox="0 0 32 32" fill="none" stroke="#ced0d6" stroke-width="3" stroke-linecap="round" stroke-linejoin="round"><circle cx="14" cy="14" r="11" stroke="#548af7" stroke-width="2.4"/><path d="M16 17 h12 l-6 6 l6 6 h-12 z" fill="#2b2d30" stroke="#b589ec" stroke-width="2.2" stroke-linejoin="miter"/></svg><div class="t" style="left:1508px;top:2504.76px;font-size:31px;color:#aeb1b7;font-weight:400;font-family:'Liberation Sans', sans-serif;">MainActivity</div><svg style="position:absolute;left:1725px;top:2500px;" width="32" height="32" viewBox="0 0 32 32" fill="none" stroke="#ced0d6" stroke-width="3" stroke-linecap="round" stroke-linejoin="round"><circle cx="16" cy="16" r="13" stroke="#db5c5c" stroke-width="2.4"/><path d="M10 22 v-8 M10 16 a3 3 0 0 1 6 0 v6 M16 16 a3 3 0 0 1 6 0 v6" stroke="#db5c5c" stroke-width="2.2"/></svg><div class="t" style="left:1765px;top:2504.76px;font-size:31px;color:#aeb1b7;font-weight:400;font-family:'Liberation Sans', sans-serif;">onCreate</div><div class="t" style="left:3271px;top:2503.91px;font-size:32px;color:#aeb1b7;font-weight:400;font-family:'Liberation Sans', sans-serif;letter-spacing:0.3px;">Importing &#x27;practice&#x27; Gradle Project</div><div style="left:3772px;top:2515px;width:292px;height:8px;background:linear-gradient(90deg,#5c8ef5,#3d70dc);border-radius:4px;"></div><div style="left:4077px;top:2503px;width:32px;height:32px;background:#4a4c50;border-radius:50%;"></div><svg style="position:absolute;left:4083px;top:2509px;" width="20" height="20" viewBox="0 0 20 20" fill="none" stroke="#ced0d6" stroke-width="3" stroke-linecap="round" stroke-linejoin="round"><path d="M4 4 L16 16 M16 4 L4 16" stroke="#a8abb0" stroke-width="2"/></svg><div class="t" style="left:4135px;top:2504.76px;font-size:31px;color:#aeb1b7;font-weight:400;font-family:'Liberation Sans', sans-serif;">30:6</div><div class="t" style="left:4228px;top:2504.76px;font-size:31px;color:#aeb1b7;font-weight:400;font-family:'Liberation Sans', sans-serif;letter-spacing:-1px;">LF</div><div class="t" style="left:4295px;top:2504.76px;font-size:31px;color:#aeb1b7;font-weight:400;font-family:'Liberation Sans', sans-serif;letter-spacing:-1px;">UTF-8</div><svg style="position:absolute;left:4409px;top:2503px;" width="32" height="32" viewBox="0 0 32 32" fill="none" stroke="#ced0d6" stroke-width="3" stroke-linecap="round" stroke-linejoin="round"><path d="M16 2 C17 11 21 15 30 16 C21 17 17 21 16 30 C15 21 11 17 2 16 C11 15 15 11 16 2 Z" fill="#ced0d6" stroke="none"/></svg><div class="t" style="left:4487px;top:2504.76px;font-size:31px;color:#aeb1b7;font-weight:400;font-family:'Liberation Sans', sans-serif;">4 spaces</div><svg style="position:absolute;left:4640px;top:2500px;" width="34" height="34" viewBox="0 0 34 34" fill="none" stroke="#ced0d6" stroke-width="3" stroke-linecap="round" stroke-linejoin="round"><rect x="6.2" y="15.2" width="17.6" height="14.1" rx="3" stroke-width="2.5"/><path d="M16.5 15.2 V12.5 A4.9 4.9 0 0 1 26.3 12.5 V15 M15 19.5 V24.5" stroke-width="2.5"/></svg>
</body></html>
